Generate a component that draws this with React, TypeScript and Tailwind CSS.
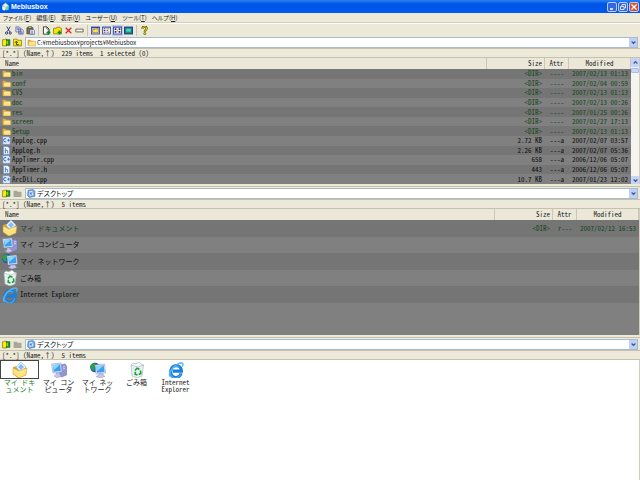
import type { ReactNode } from "react";

const MONO = "font-['Noto_Sans_Mono_CJK_JP','Liberation_Mono','Noto_Sans_CJK_JP',monospace]";
const UI = "font-['Noto_Sans_CJK_JP','Liberation_Sans',sans-serif]";

type IconName =
  | "cut" | "copy" | "paste" | "newFile" | "newFolder" | "delete" | "rename"
  | "viewFolder" | "viewList" | "viewTiles" | "viewImage" | "help"
  | "app" | "drive" | "up" | "upOff" | "folder" | "desktop" | "cpp" | "header"
  | "docs" | "computer" | "network" | "bin" | "ie";

const art: Record<IconName, ReactNode> = {
  cut: (
    <g fill="none" stroke="#1c2b6b" strokeWidth="1.6">
      <path d="M5 1l5 9M11 1L6 10" />
      <circle cx="4.5" cy="12.5" r="2" />
      <circle cx="11" cy="12.5" r="2" />
    </g>
  ),
  copy: (
    <g stroke="#27378b" fill="#e4e6fa">
      <path d="M1.500 1.500h6l2 2v7h-8zM6.500 5.500h6l2 2v7h-8z" />
      <path d="M3 4h4M3 6h3M8 9h4M8 11h5M8 13h5" />
    </g>
  ),
  paste: (
    <g>
      <path d="M1.500 3h11v11h-11z" fill="#77715c" stroke="#33312a" />
      <path d="M4 1h6v3H4z" fill="#e8d860" stroke="#33312a" />
      <path d="M7 6h6l2 2v7H7z" fill="#fff" stroke="#27378b" />
      <path d="M9 9h4M9 11h4M9 13h4" stroke="#27378b" />
    </g>
  ),
  newFile: (
    <g>
      <path d="M2.500 1.500h6l4 4v9h-10z" fill="#fff" stroke="#222" strokeWidth="1.500" />
      <path d="M8.500 1.500v4h4" fill="none" stroke="#222" />
      <path d="M11.500 8v7M8 11.500h7" stroke="#0a8a18" strokeWidth="3" />
    </g>
  ),
  newFolder: (
    <g>
      <path d="M1 4h5l1-2h5l1 2h2v10H1z" fill="#ffe800" stroke="#5b5200" />
      <path d="M11.500 8v7M8 11.500h7" stroke="#0a8a18" strokeWidth="3" />
    </g>
  ),
  delete: <path d="M3 3l10 10M13 3L3 13" stroke="#e0201c" strokeWidth="2.2" />,
  rename: <path d="M1.500 5.500h13v5h-13z" fill="#fdfdf3" stroke="#55544a" strokeWidth="1.5" />,
  viewFolder: (
    <g>
      <path d="M0 1h16v14H0z" fill="#3340b4" />
      <path d="M1.500 4h13v9.500h-13z" fill="#dfe3ff" />
      <path d="M3 6h4l1-1h5v7H3z" fill="#ffe04a" stroke="#6b5a00" />
    </g>
  ),
  viewList: (
    <g>
      <path d="M0 1h16v14H0z" fill="#3340b4" />
      <path d="M1.500 3h13v10.500h-13z" fill="#f2f3ff" />
      <path d="M3 5h3M3 8h3M3 11h3" stroke="#222" strokeWidth="1.5" />
      <path d="M8 5h5M8 8h3M8 11h5" stroke="#8b7a35" strokeWidth="1.5" />
    </g>
  ),
  viewTiles: (
    <g>
      <path d="M0 1h16v14H0z" fill="#3340b4" />
      <path d="M1.500 3h13v10.500h-13z" fill="#f2f3ff" />
      <path d="M3 4h3v3H3zM10 4h3v3h-3zM3 9h3v3H3zM10 9h3v3h-3z" fill="#2b2b44" />
      <path d="M7 6h2v4H7z" fill="#c9b550" />
    </g>
  ),
  viewImage: (
    <g>
      <path d="M0 1h16v14H0z" fill="#2834a8" />
      <path d="M2 3h12v10H2z" fill="#1c9a48" />
      <path d="M4 5h8v5H4z" fill="#39d8e8" />
    </g>
  ),
  help: (
    <g>
      <path d="M4.500 5c0-5 8-5 7 0-.5 2-3 2.500-3 5" fill="none" stroke="#3a3500" strokeWidth="4" />
      <path d="M4.500 5c0-5 8-5 7 0-.5 2-3 2.500-3 5" fill="none" stroke="#f2e000" strokeWidth="1.800" />
      <circle cx="8.500" cy="13.500" r="2" fill="#f2e000" stroke="#3a3500" />
    </g>
  ),
  app: (
    <g>
      <path d="M2 6l6-5 6 5-1 8H3z" fill="#9fe0f5" stroke="#3a7fb8" />
      <path d="M4 5l4-2 4 3-4 3z" fill="#fff6b0" />
      <path d="M2 8l5 2v5l-4-1z" fill="#fff" />
      <path d="M9 9l5-2-1 6-4 2z" fill="#7fcf8d" />
    </g>
  ),
  drive: (
    <g>
      <path d="M1 3h3l1-1h3v12H1z" fill="#ffee00" stroke="#4b5b00" />
      <path d="M8 3h6v10H8z" fill="#18a020" stroke="#0b4b0e" />
      <path d="M4 5h6v6H4z" fill="#ffee00" />
      <path d="M8 3v10" stroke="#2b4b00" />
    </g>
  ),
  up: (
    <g>
      <path d="M1 2h6l1 2h7v10H1z" fill="#ffee00" stroke="#5b5200" />
      <path d="M11 12H6V7M3.500 8.500L6 5.500l2.500 3" fill="none" stroke="#222" strokeWidth="1.5" />
    </g>
  ),
  upOff: <path d="M1 3h6l1 2h7v9H1z" fill="#a9a797" />,
  folder: (
    <g>
      <path d="M1 3h5l1.500 2H13v8H1z" fill="#e3ac35" />
      <path d="M3 6h12.500v8H2z" fill="#ffe384" stroke="#c58a20" strokeWidth=".8" />
      <path d="M4 7.500h10" stroke="#fffbd8" strokeWidth="1.200" />
    </g>
  ),
  desktop: (
    <g>
      <path d="M2 2l9-1 3 3v9l-10 2-3-3z" fill="#72a9e4" stroke="#2c5da8" />
      <path d="M4 4l7-1v8l-7 1z" fill="#d8ecff" />
      <path d="M6 9l5-5M6 6v3h3" stroke="#2c5da8" strokeWidth="1.300" fill="none" />
    </g>
  ),
  cpp: (
    <g>
      <path d="M1.500 1h10l3 3v11h-13z" fill="#dfeaff" stroke="#5f86c4" />
      <path d="M7.500 5a3 3 0 100 5" fill="none" stroke="#2458a8" strokeWidth="1.600" />
      <path d="M9 7.500h5M11.500 5v5" stroke="#2458a8" strokeWidth="1.200" />
    </g>
  ),
  header: (
    <g>
      <path d="M2.500 1h8l3 3v11h-11z" fill="#eef5ff" stroke="#5f86c4" />
      <path d="M6 4v9M6 9c1-2 4-2 4 0v4" fill="none" stroke="#3a70c4" strokeWidth="1.600" />
    </g>
  ),
  docs: (
    <g>
      <path d="M1 5l4-1 2 2 7-1v8l-8 3-5-4z" fill="#e0a52e" />
      <path d="M4 5l5-5 5 5-5 6z" fill="#e4f2ff" stroke="#8db4df" strokeWidth=".6" />
      <path d="M6 5l3-3 3 3-3 3z" fill="#86bdf0" />
      <path d="M1 6l6 3 8-3-1 7-7 3-6-4z" fill="#ffe27a" stroke="#d09428" strokeWidth=".5" />
      <path d="M2 8l5 3 6-3" fill="none" stroke="#fff6c0" strokeWidth=".8" />
    </g>
  ),
  computer: (
    <g>
      <path d="M9 3l5-1 1.500 2v9l-5 2-2-1z" fill="#9495cf" stroke="#6062a4" strokeWidth=".5" />
      <path d="M12 5l2-.5M12 7l2-.5" stroke="#e4e4ff" strokeWidth=".8" />
      <path d="M.5 2l9.500-1 1 9-9 1z" fill="#e7e9f8" stroke="#8286bb" strokeWidth=".5" />
      <path d="M1.700 3l7.500-.8.700 6.800-7.200.8z" fill="#3ca0ee" />
      <path d="M1.700 3l7.500-.8L3 8z" fill="#8fd6ff" />
      <path d="M5 11h3l1 2 2 1-5 2-3-2 2-1z" fill="#c6c7e6" stroke="#8889bb" strokeWidth=".4" />
    </g>
  ),
  network: (
    <g>
      <circle cx="5" cy="5.500" r="4.800" fill="#2058b8" />
      <path d="M2 2c3-2 4 0 4 1l-2 3 1 3-3-1-2-4z" fill="#2aa63c" />
      <path d="M5 3l9.500-1 1 9-9.500 1z" fill="#e7e9f8" stroke="#8286bb" strokeWidth=".5" />
      <path d="M6.200 4l7.500-.8.800 6.800-7.500.8z" fill="#3ca0ee" />
      <path d="M6.200 4l7.500-.8L7.500 9z" fill="#8fd6ff" />
      <path d="M9 12h4l1 1.500 1 1-5 1.500-4-1.500 2-1z" fill="#c6c7e6" stroke="#8889bb" strokeWidth=".4" />
    </g>
  ),
  bin: (
    <g>
      <path d="M2 3l6-1.500L14.500 3 13 14l-5 2-5-2z" fill="#e6f1f3" stroke="#9bb4ba" strokeWidth=".6" />
      <path d="M2 3l2-2 3 1 3-2 2 2 2.500 1L9 5z" fill="#fff" stroke="#9bb4ba" strokeWidth=".6" />
      <path d="M6 8.500l2-2.200 2.500 1M11.500 8.500l.3 3-2 1M8.500 13l-2.300-.8.200-2.500" fill="none" stroke="#23a033" strokeWidth="1.600" />
    </g>
  ),
  ie: (
    <g fill="none">
      <path d="M13 11.200A5.200 5.200 0 113 8.500a5.200 5.200 0 0110.400.6H5" stroke="#1c7fd6" strokeWidth="3.200" />
      <path d="M12.500 11A5 5 0 113.500 8a5 5 0 018-2.500" stroke="#45aaf0" strokeWidth="1.100" />
      <path d="M2.500 15C-1 12 5 3.500 12 1.200c3.500-.9 3.300 1.500 2.300 3.300" stroke="#4db8f8" strokeWidth="1.400" />
    </g>
  ),
};

function Icon({ name, size }: { name: IconName; size: string }) {
  return (
    <svg viewBox="0 0 16 16" className={`${size} block shrink-0`} aria-hidden="true">
      {art[name]}
    </svg>
  );
}

function Chevron({ up = false }: { up?: boolean }) {
  return (
    <svg viewBox="0 0 8 8" className="block size-[5px]" aria-hidden="true">
      <path d={up ? "M1 5.500l3-3 3 3" : "M1 2.500l3 3 3-3"} fill="none" stroke="#3f5a96" strokeWidth="2" />
    </svg>
  );
}

function TitleBar() {
  const button = "flex size-[10px] items-center justify-center rounded-[2px] border border-[#b9cdf8]";
  return (
    <header className="flex h-[13px] shrink-0 items-center bg-linear-to-b from-[#2b83f6] via-[#0054e3] via-30% to-[#0059f2] pr-px pl-[1px]">
      <Icon name="app" size="size-[9px]" />
      <h1 className="ml-px flex-1 font-['Liberation_Sans',sans-serif] text-[7px] leading-[12px] font-bold text-white">Mebiusbox</h1>
      <div className="flex gap-px">
        <button aria-label="Minimize" className={`${button} bg-[#3567dd]`}>
          <svg viewBox="0 0 8 8" className="size-[8px]"><path d="M2 6h3" stroke="#fff" strokeWidth="1.500" /></svg>
        </button>
        <button aria-label="Restore" className={`${button} bg-[#3567dd]`}>
          <svg viewBox="0 0 8 8" className="size-[8px]"><path d="M3 3V1.500h3.500V5H5M1.500 3.500H5v3H1.500z" fill="none" stroke="#fff" strokeWidth=".8" /></svg>
        </button>
        <button aria-label="Close" className={`${button} bg-[#dd4b27]`}>
          <svg viewBox="0 0 8 8" className="size-[8px]"><path d="M1.500 1.500l5 5M6.500 1.500l-5 5" stroke="#fff" strokeWidth="1.400" /></svg>
        </button>
      </div>
    </header>
  );
}

const menus = [
  ["ファイル", "F"],
  ["編集", "E"],
  ["表示", "V"],
  ["ユーザー", "U"],
  ["ツール", "T"],
  ["ヘルプ", "H"],
];

function MenuBar() {
  return (
    <nav className={`flex h-[10px] shrink-0 items-center gap-[5px] border-b border-[#d3cfbd] pl-[3px] ${UI} text-[6px] leading-[9px] text-[#222] [font-feature-settings:'palt']`}>
      {menus.map(([label, key]) => (
        <button key={key} className="whitespace-nowrap">
          {label}(<u>{key}</u>)
        </button>
      ))}
    </nav>
  );
}

const tools: { label: string; icon: IconName; pressed?: boolean }[][] = [
  [
    { label: "切り取り", icon: "cut" },
    { label: "コピー", icon: "copy" },
    { label: "貼り付け", icon: "paste" },
  ],
  [
    { label: "新規ファイル", icon: "newFile" },
    { label: "新規フォルダ", icon: "newFolder" },
    { label: "削除", icon: "delete" },
    { label: "名前の変更", icon: "rename" },
  ],
  [
    { label: "アイコン", icon: "viewFolder" },
    { label: "一覧", icon: "viewList" },
    { label: "詳細", icon: "viewTiles", pressed: true },
    { label: "縮小版", icon: "viewImage" },
  ],
  [{ label: "ヘルプ", icon: "help" }],
];

function ToolBar() {
  return (
    <div role="toolbar" className="flex h-[13px] shrink-0 items-center border-t border-white pl-[3px]">
      {tools.map((group, i) => (
        <div key={i} className="mr-[2px] flex border-r border-[#c9c5b2] pr-[2px] last:border-r-0">
          {group.map((t) => (
            <button
              key={t.label}
              aria-label={t.label}
              className={`flex h-[11px] w-[11px] items-center justify-center ${t.pressed ? "bg-[#c3cbe0]" : ""}`}
            >
              <Icon name={t.icon} size="size-[9px]" />
            </button>
          ))}
        </div>
      ))}
    </div>
  );
}

function AddressBar({ path, icon, canGoUp, label }: { path: string; icon: IconName; canGoUp: boolean; label: string }) {
  return (
    <div className="flex h-[13px] shrink-0 items-center border-b border-[#c6c2ae] pr-[2px] pl-[2px]">
      <button aria-label="ドライブ"><Icon name="drive" size="size-[9px]" /></button>
      <button aria-label="上へ" className="ml-[2px]" disabled={!canGoUp}>
        <Icon name={canGoUp ? "up" : "upOff"} size="size-[9px]" />
      </button>
      <div className="relative ml-[3px] flex h-[11px] flex-1 items-center border border-[#a9bccb] bg-white pl-px">
        <Icon name={icon} size="size-[9px]" />
        <select
          aria-label={label}
          className={`h-[9px] flex-1 appearance-none bg-transparent pl-px ${UI} ${canGoUp ? "text-[6px]" : "text-[7px]"} leading-[9px] text-[#111] [font-feature-settings:'palt']`}
        >
          <option>{path}</option>
        </select>
        <span className="pointer-events-none absolute inset-y-0 right-0 flex w-[8px] items-center justify-center bg-[#bfd0f8]">
          <Chevron />
        </span>
      </div>
    </div>
  );
}

function StatusLine({ children }: { children: string }) {
  return (
    <p className={`h-[9px] shrink-0 border-b border-[#c6c2ae] pl-[2px] ${MONO} text-[7px] leading-[8px] whitespace-pre text-[#222]`}>
      {children}
    </p>
  );
}

type Row = { name: string; icon: IconName; size: string; attr: string; date: string; dir?: boolean };

const dir = (name: string, date: string): Row => ({ name, icon: "folder", size: "<DIR>", attr: "----", date, dir: true });
const file = (name: string, icon: IconName, size: string, date: string): Row => ({ name, icon, size, attr: "---a", date });

const files: Row[] = [
  dir("bin", "2007/02/13 01:13"),
  dir("conf", "2007/02/04 00:59"),
  dir("CVS", "2007/02/13 01:13"),
  dir("doc", "2007/02/13 00:26"),
  dir("res", "2007/01/25 00:26"),
  dir("screen", "2007/01/27 17:13"),
  dir("Setup", "2007/02/13 01:13"),
  file("AppLog.cpp", "cpp", "2.72 KB", "2007/02/07 03:57"),
  file("AppLog.h", "header", "2.26 KB", "2007/02/07 05:36"),
  file("AppTimer.cpp", "cpp", "658", "2006/12/06 05:07"),
  file("AppTimer.h", "header", "443", "2006/12/06 05:07"),
  file("ArcDll.cpp", "cpp", "10.7 KB", "2007/01/23 12:02"),
];

const places: Row[] = [
  { name: "マイ ドキュメント", icon: "docs", size: "<DIR>", attr: "r---", date: "2007/02/12 16:53", dir: true },
  { name: "マイ コンピュータ", icon: "computer", size: "", attr: "", date: "" },
  { name: "マイ ネットワーク", icon: "network", size: "", attr: "", date: "" },
  { name: "ごみ箱", icon: "bin", size: "", attr: "", date: "" },
  { name: "Internet Explorer", icon: "ie", size: "", attr: "", date: "" },
];

function FileTable({ rows, large = false }: { rows: Row[]; large?: boolean }) {
  const th = "border-r border-[#cbc7b5] p-0 font-normal";
  return (
    <table className={`w-full ${large ? "h-[94px]" : "h-full"} table-fixed border-separate border-spacing-0 ${MONO} text-[7px] leading-[9px] whitespace-pre`}>
      <colgroup>
        <col />
        <col className="w-[58px]" />
        <col className="w-[24px]" />
        <col className="w-[62px]" />
      </colgroup>
      <thead className="bg-[#ebe8d9] text-[#222]">
        <tr className="h-[11px]">
          <th className={`${th} pl-[5px] text-left`}>Name</th>
          <th className={`${th} pr-[2px] text-right`}>Size</th>
          <th className={`${th} text-center`}>Attr</th>
          <th className={`${th} text-center`}>Modified</th>
        </tr>
      </thead>
      <tbody>
        {rows.map((r) => (
          <tr key={r.name} className={`odd:bg-[#757575] even:bg-[#808080] ${r.dir ? "text-[#14451a]" : "text-[#0c0c0c]"}`}>
            <td className="p-0">
              <div className={`flex items-center ${large ? "gap-[2px] pl-[2px]" : "gap-px pl-[2px]"}`}>
                <Icon name={r.icon} size={large ? "size-[16px]" : "size-[9px]"} />
                {r.name}
              </div>
            </td>
            <td className="p-0 pr-[3px] text-right">{r.size}</td>
            <td className="p-0 text-center">{r.attr}</td>
            <td className="p-0 pr-[3px] text-right">{r.date}</td>
          </tr>
        ))}
      </tbody>
    </table>
  );
}

function ScrollBar() {
  return (
    <div className="flex w-[8px] shrink-0 flex-col bg-[#f5f4ee]">
      <button aria-label="上へスクロール" className="flex h-[9px] items-center justify-center rounded-[1px] bg-[#c3d3fb]"><Chevron up /></button>
      <div className="mt-px h-[5px] rounded-[1px] border border-[#a9bdf0] bg-[#c8d6fb]" />
      <div className="flex-1" />
      <button aria-label="下へスクロール" className="flex h-[8px] items-center justify-center rounded-[1px] bg-[#c3d3fb]"><Chevron /></button>
    </div>
  );
}

function TileView() {
  return (
    <ul className={`flex min-h-0 flex-1 border-r border-[#d0cdbd] bg-white ${MONO} text-[7px] leading-[7px] text-[#222]`}>
      {places.map((p, i) => (
        <li key={p.name} className={`w-[39px] text-center ${p.dir ? "text-[#16801d]" : ""}`}>
          <div className={`flex h-[19px] items-center justify-center border ${i === 0 ? "border-[#444]" : "border-transparent"}`}>
            <Icon name={p.icon} size="size-[16px]" />
          </div>
          <p className="px-[3px] break-all [line-break:anywhere]">{p.name}</p>
        </li>
      ))}
    </ul>
  );
}

export default function App() {
  return (
    <main className="flex h-screen flex-col overflow-hidden bg-[#ece9d8]">
      <TitleBar />
      <MenuBar />
      <ToolBar />
      <section className="flex min-h-0 flex-[151] flex-col">
        <AddressBar path="C:¥mebiusbox¥projects¥Mebiusbox" icon="folder" canGoUp label="アドレス 1" />
        <StatusLine>{"[*.*] (Name,↑)  229 items  1 selected (0)"}</StatusLine>
        <div className="flex min-h-0 flex-1 border-r border-[#d0cdbd]">
          <div className="min-w-0 flex-1"><FileTable rows={files} /></div>
          <ScrollBar />
        </div>
        <div className="h-[3px] shrink-0 border-b border-[#c6c2ae]" />
      </section>
      <section className="flex min-h-0 flex-[151] flex-col">
        <AddressBar path="デスクトップ" icon="desktop" canGoUp={false} label="アドレス 2" />
        <StatusLine>{"[*.*] (Name,↑)  5 items"}</StatusLine>
        <div className="min-h-0 flex-1 border-r border-[#d0cdbd] bg-[#808080]">
          <FileTable rows={places} large />
        </div>
        <div className="h-[3px] shrink-0 border-b border-[#c6c2ae]" />
      </section>
      <section className="flex min-h-0 flex-[142] flex-col">
        <AddressBar path="デスクトップ" icon="desktop" canGoUp={false} label="アドレス 3" />
        <StatusLine>{"[*.*] (Name,↑)  5 items"}</StatusLine>
        <TileView />
      </section>
    </main>
  );
}
